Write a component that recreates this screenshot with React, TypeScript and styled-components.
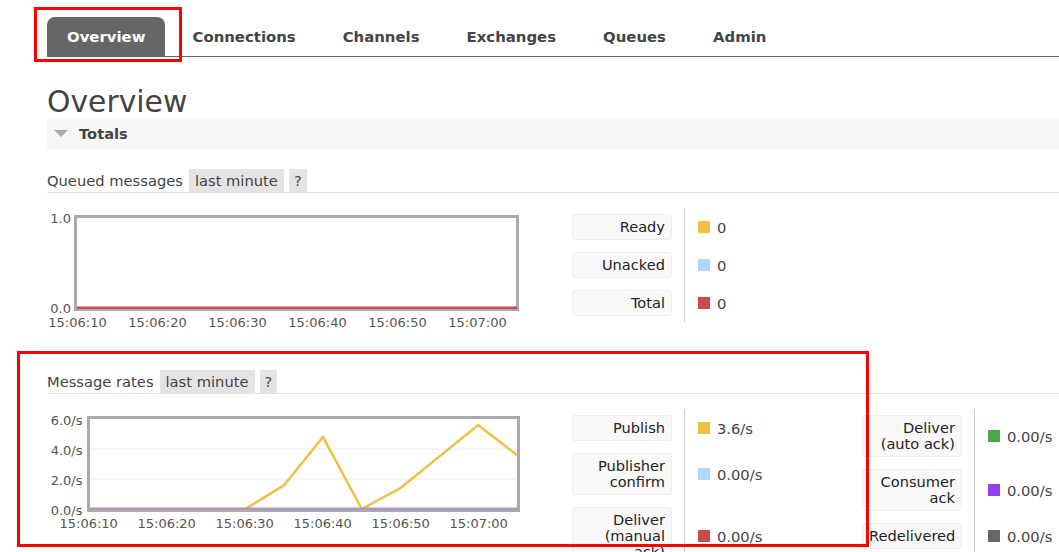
import React from 'react';
import styled, { createGlobalStyle, css } from 'styled-components';

const Global = createGlobalStyle`
  html, body { margin: 0; padding: 0; overflow: hidden; background: #fff; }
  body { font-family: "DejaVu Sans", Verdana, sans-serif; color: #444; }
  * { box-sizing: border-box; }
`;

const Page = styled.div`
  position: relative;
  width: 1059px;
  height: 552px;
  overflow: hidden;
  padding-left: 47px;
`;

const Content = styled.div`
  width: 1200px;
`;

const Nav = styled.nav`
  display: flex;
  gap: 7px;
  margin-top: 17px;
  border-bottom: 1px solid #666;
`;

const NavItem = styled.div<{ $active?: boolean }>`
  padding: 12px 20px 10px;
  font-size: 14.9px;
  font-weight: bold;
  line-height: 17px;
  color: #444;
  border-radius: 8px 8px 0 0;
  ${(p) =>
    p.$active &&
    css`
      background: #666;
      color: #fff;
    `}
`;

const Title = styled.h1`
  margin: 28px 0 0;
  font-size: 29.8px;
  font-weight: normal;
  line-height: 33px;
  color: #444;
`;

const TotalsBar = styled.div`
  display: flex;
  align-items: center;
  gap: 11px;
  height: 31px;
  padding-left: 7px;
  background: #f7f7f7;
  font-size: 14.7px;
  font-weight: bold;
  color: #444;
`;

const Triangle = styled.span`
  width: 0;
  height: 0;
  border-left: 7px solid transparent;
  border-right: 7px solid transparent;
  border-top: 7px solid #aaa;
`;

const SectionHeader = styled.div<{ $gap: number }>`
  display: flex;
  align-items: center;
  margin-top: ${(p) => p.$gap}px;
  border-bottom: 1px solid #e2e2e2;
  font-size: 14.7px;
  color: #444;
`;

const HeaderTitle = styled.span`
  margin-right: 6px;
`;

const Badge = styled.span<{ $narrow?: boolean }>`
  background: #e4e4e4;
  line-height: 17px;
  padding: 3px ${(p) => (p.$narrow ? 5 : 6)}px;
  margin-right: 5px;
`;

const Body = styled.div`
  display: flex;
  align-items: flex-start;
  margin-top: 15px;
`;

const ChartSvg = styled.svg`
  flex: none;
  display: block;
  text {
    font-family: "DejaVu Sans", Verdana, sans-serif;
    font-size: 13px;
    fill: #545454;
  }
`;

const Legend = styled.div`
  display: flex;
  align-items: flex-start;
  margin-left: 50px;
`;

const LegendGroup = styled.div<{ $valueWidth: number }>`
  flex: none;
  display: grid;
  grid-template-columns: 112px ${(p) => p.$valueWidth}px;
  align-content: start;
`;

const LabelCell = styled.div`
  padding: 6px 12px 6px 0;
`;

const LabelBox = styled.div`
  width: 100px;
  padding: 4px 6px;
  background: #f9f9f9;
  border: 1px solid #eee;
  border-radius: 3px;
  text-align: right;
  font-size: 14.6px;
  line-height: 16px;
  color: #222;
  white-space: normal;
`;

const ValueCell = styled.div`
  display: flex;
  align-items: center;
  border-left: 1px solid #ccc;
  padding-left: 13px;
  font-size: 14.7px;
  color: #444;
  white-space: nowrap;
`;

const Swatch = styled.span<{ $color: string }>`
  width: 12px;
  height: 12px;
  margin-right: 7px;
  background: ${(p) => p.$color};
  flex: none;
`;

const Annotation = styled.div<{ $l: number; $t: number; $w: number; $h: number }>`
  position: absolute;
  left: ${(p) => p.$l}px;
  top: ${(p) => p.$t}px;
  width: ${(p) => p.$w}px;
  height: ${(p) => p.$h}px;
  border: 3px solid #f00;
  pointer-events: none;
`;

type Row = { label: string; color: string; value: string };

const LegendTable: React.FC<{ rows: Row[]; valueWidth: number }> = ({ rows, valueWidth }) => (
  <LegendGroup $valueWidth={valueWidth}>
    {rows.map((r) => (
      <React.Fragment key={r.label}>
        <LabelCell>
          <LabelBox>{r.label}</LabelBox>
        </LabelCell>
        <ValueCell>
          <Swatch $color={r.color} />
          {r.value}
        </ValueCell>
      </React.Fragment>
    ))}
  </LegendGroup>
);

const times = ['15:06:10', '15:06:20', '15:06:30', '15:06:40', '15:06:50', '15:07:00'];

const QueuedChart = () => (
  <ChartSvg width={475} height={125} viewBox="0 0 475 125">
    <rect x={28.5} y={8.5} width={442} height={93} fill="#fff" stroke="#aaa" strokeWidth={3} />
    <line x1={30} y1={99.8} x2={470} y2={99.8} stroke="#cb4b4b" strokeWidth={2.4} />
    <text x={24} y={15} textAnchor="end">1.0</text>
    <text x={24} y={105} textAnchor="end">0.0</text>
    {times.map((t, i) => (
      <text key={t} x={30.5 + i * 80} y={119} textAnchor="middle">
        {t}
      </text>
    ))}
  </ChartSvg>
);

const ratePoints: [number, number][] = [
  [43, 100],
  [198.4, 100],
  [237.2, 76],
  [276, 28],
  [314.8, 100],
  [353.6, 79],
  [431.2, 16],
  [470, 46],
];

const RatesChart = () => (
  <ChartSvg width={475} height={125} viewBox="0 0 475 125">
    <rect x={41.5} y={8.5} width={430} height={93} fill="#fff" stroke="#aaa" strokeWidth={3} />
    <line x1={43} y1={40} x2={470} y2={40} stroke="#ececec" strokeWidth={1} />
    <line x1={43} y1={70} x2={470} y2={70} stroke="#ececec" strokeWidth={1} />
    <polyline
      points={ratePoints.map((p) => p.join(',')).join(' ')}
      fill="none"
      stroke="#edc240"
      strokeWidth={2.5}
      strokeLinejoin="miter"
    />
    <line x1={43} y1={99.8} x2={470} y2={99.8} stroke="#ab98c0" strokeWidth={2.4} />
    <text x={35.5} y={15.5} textAnchor="end">6.0/s</text>
    <text x={35.5} y={45.5} textAnchor="end">4.0/s</text>
    <text x={35.5} y={75.5} textAnchor="end">2.0/s</text>
    <text x={35.5} y={105.5} textAnchor="end">0.0/s</text>
    {times.map((t, i) => (
      <text key={t} x={41.7 + i * 78} y={119} textAnchor="middle">
        {t}
      </text>
    ))}
  </ChartSvg>
);

const queuedRows: Row[] = [
  { label: 'Ready', color: '#edc240', value: '0' },
  { label: 'Unacked', color: '#afd8f8', value: '0' },
  { label: 'Total', color: '#cb4b4b', value: '0' },
];

const rateRowsLeft: Row[] = [
  { label: 'Publish', color: '#edc240', value: '3.6/s' },
  { label: 'Publisher confirm', color: '#afd8f8', value: '0.00/s' },
  { label: 'Deliver (manual ack)', color: '#cb4b4b', value: '0.00/s' },
];

const rateRowsRight: Row[] = [
  { label: 'Deliver (auto ack)', color: '#4da74d', value: '0.00/s' },
  { label: 'Consumer ack', color: '#9440ed', value: '0.00/s' },
  { label: 'Redelivered', color: '#666666', value: '0.00/s' },
];

export default function App() {
  return (
    <Page>
      <Global />
      <Content>
        <Nav>
          <NavItem $active>Overview</NavItem>
          <NavItem>Connections</NavItem>
          <NavItem>Channels</NavItem>
          <NavItem>Exchanges</NavItem>
          <NavItem>Queues</NavItem>
          <NavItem>Admin</NavItem>
        </Nav>
        <Title>Overview</Title>
        <TotalsBar>
          <Triangle />
          Totals
        </TotalsBar>

        <SectionHeader $gap={20}>
          <HeaderTitle>Queued messages</HeaderTitle>
          <Badge>last minute</Badge>
          <Badge $narrow>?</Badge>
        </SectionHeader>
        <Body>
          <QueuedChart />
          <Legend>
            <LegendTable rows={queuedRows} valueWidth={178} />
          </Legend>
        </Body>

        <SectionHeader $gap={37}>
          <HeaderTitle>Message rates</HeaderTitle>
          <Badge>last minute</Badge>
          <Badge $narrow>?</Badge>
        </SectionHeader>
        <Body>
          <RatesChart />
          <Legend>
            <LegendTable rows={rateRowsLeft} valueWidth={178} />
            <LegendTable rows={rateRowsRight} valueWidth={178} />
          </Legend>
        </Body>
      </Content>
      <Annotation $l={34} $t={7} $w={148} $h={55} />
      <Annotation $l={17} $t={351} $w={852} $h={196} />
    </Page>
  );
}
